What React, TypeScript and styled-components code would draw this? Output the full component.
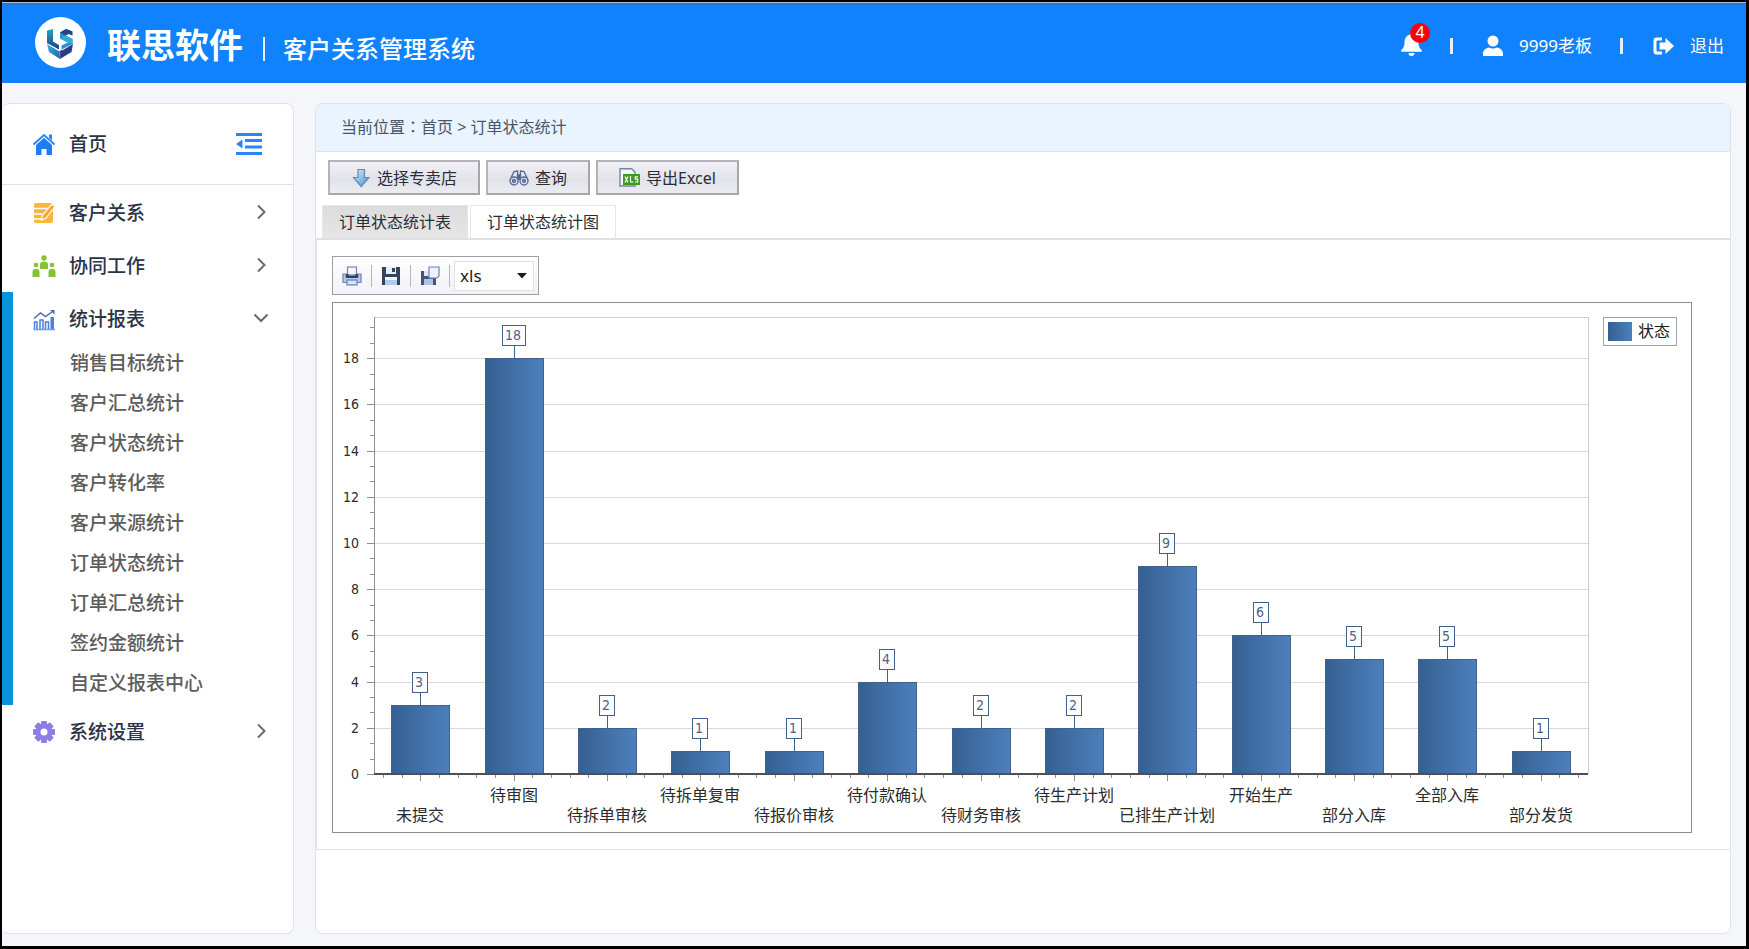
import React, { useState } from "react";
import styled, { createGlobalStyle } from "styled-components";

const sans = '"Noto Sans", "Noto Sans CJK SC", sans-serif';
const chartFont = '"DejaVu Sans Condensed", "Noto Sans CJK SC", sans-serif';

const GlobalStyle = createGlobalStyle`
  *, *::before, *::after { box-sizing: border-box; }
  body { margin: 0; background: #f5f6fa; font-family: ${sans}; }
  button, select { font-family: inherit; }
`;

const Page = styled.div`
  display: flex;
  flex-direction: column;
  min-height: 100vh;
  border: 2px solid #000;
  border-right-width: 3px;
  border-bottom-width: 3px;
  background: #f5f6fa;
`;

/* ---------- header ---------- */

const Header = styled.header`
  display: flex;
  align-items: center;
  height: 81px;
  padding: 0 22px 0 33px;
  border-top: 1px solid #a9c0e6;
  background: #1182fd;
  box-shadow: inset 0 2px 0 #2c74cf;
  color: #fff;
`;

const LogoMark = styled.svg`
  flex: none;
  width: 51px;
  height: 51px;
  margin-bottom: 2px;
`;

const BrandName = styled.h1`
  margin: 0 0 0 21px;
  padding-top: 4px;
  font-size: 34px;
  line-height: 40px;
  font-weight: 700;
  white-space: nowrap;
`;

const BrandRule = styled.span`
  width: 2px;
  height: 24px;
  margin: 12px 18px 0 20px;
  background: #e2efff;
`;

const SystemName = styled.h2`
  margin: 0;
  padding-top: 12px;
  font-size: 24px;
  line-height: 32px;
  font-weight: 500;
  white-space: nowrap;
`;

const UserArea = styled.div`
  display: flex;
  align-items: center;
  margin-left: auto;
  padding-top: 5px;
  font-size: 17px;
  line-height: 24px;
`;

const HeaderRule = styled.span`
  width: 3px;
  height: 16px;
  margin: 0 30px 0 28px;
  background: #e2efff;
`;

const BellButton = styled.button`
  position: relative;
  display: flex;
  margin-bottom: 2px;
  padding: 0;
  border: 0;
  background: none;
  color: inherit;
`;

const Badge = styled.span`
  position: absolute;
  top: -10px;
  right: -8px;
  width: 20px;
  height: 20px;
  border-radius: 50%;
  background: #fb0007;
  font-size: 16px;
  line-height: 19px;
  text-align: center;
`;

const HeaderLink = styled.a`
  display: flex;
  align-items: center;
  gap: 16px;
  color: inherit;
  text-decoration: none;
  white-space: nowrap;
`;

/* ---------- page body ---------- */

const Body = styled.div`
  display: flex;
  flex: 1;
  gap: 21px;
  padding: 20px 15px 12px 0;
`;

const Sidebar = styled.nav`
  flex: none;
  width: 292px;
  border: 1px solid #e0e2eb;
  border-left: 0;
  border-radius: 8px;
  background: #fff;
  overflow: hidden;
`;

const HomeRow = styled.div`
  display: flex;
  align-items: center;
  height: 81px;
  margin-bottom: 1px;
  padding: 0 31px 0 30px;
  border-bottom: 1px solid #dfe1e8;
`;

const HomeLink = styled.a`
  display: flex;
  align-items: center;
  gap: 13px;
  color: #2b3347;
  font-size: 19px;
  line-height: 28px;
  font-weight: 500;
  text-decoration: none;
`;

const CollapseButton = styled.button`
  display: flex;
  margin-left: auto;
  padding: 0;
  border: 0;
  background: none;
`;

const Group = styled.div<{ $open?: boolean }>`
  border-left: 11px solid ${(p) => (p.$open ? "#0893dc" : "transparent")};
`;

const GroupButton = styled.button`
  display: flex;
  align-items: center;
  width: 100%;
  height: 53px;
  padding: 0 24px 0 19px;
  border: 0;
  background: none;
  color: #2b3347;
  font-size: 19px;
  line-height: 28px;
  font-weight: 500;
  text-align: left;
`;

const GroupLabel = styled.span`
  flex: 1;
  margin-left: 13px;
`;

const SubList = styled.ul`
  margin: 0;
  padding: 0;
  list-style: none;
`;

const SubLink = styled.a`
  display: block;
  padding: 8px 0 12px 57px;
  color: #5c5c5c;
  font-size: 19px;
  line-height: 20px;
  font-weight: 500;
  text-decoration: none;
`;

const Main = styled.main`
  flex: 1;
  min-width: 0;
  border: 1px solid #e0e2eb;
  border-radius: 8px;
  background: #fff;
  overflow: hidden;
`;

const Breadcrumb = styled.div`
  height: 48px;
  padding: 10px 25px;
  border-bottom: 1px solid #dce6f2;
  background: #e9f4ff;
  color: #4a5568;
  font-size: 16px;
  line-height: 24px;

  a { color: inherit; text-decoration: none; }
`;

/* The Traditional Chinese face sets its colon in the middle of the em box. */
const Colon = styled.span`
  font-family: "Noto Sans CJK TC", sans-serif;
`;

const Actions = styled.div`
  display: flex;
  gap: 6px;
  padding: 8px 12px 10px;
`;

const ActionButton = styled.button`
  display: flex;
  align-items: center;
  justify-content: center;
  gap: 6px;
  height: 35px;
  padding: 0 21px;
  border: 2px solid #a6a6ab;
  border-top-color: #b4b4b8;
  border-left-color: #b4b4b8;
  background: linear-gradient(#f1f1f6, #e2e2e9 55%, #ebebf2);
  color: #2a2c38;
  font-size: 16px;
  line-height: 24px;
`;

const Tabs = styled.div`
  display: flex;
  gap: 2px;
  padding: 0 6px;
  border-bottom: 2px solid #e0e0e2;
`;

const Tab = styled.button<{ $active?: boolean }>`
  height: 33px;
  padding: 0 16px;
  border: 1px solid #e6e6e8;
  border-bottom: 0;
  background: ${(p) => (p.$active ? "#fff" : "linear-gradient(#dcdcdd, #e6e6e7)")};
  color: #2a2c38;
  font-size: 16px;
  line-height: 24px;
`;

const TabPanel = styled.section`
  padding: 16px 38px 16px 15px;
  border-left: 1px solid #e0e2eb;
  border-bottom: 1px solid #e3e3ea;
`;

const ReportToolbar = styled.div`
  display: flex;
  align-items: center;
  width: fit-content;
  height: 39px;
  padding: 0 4px 0 9px;
  border: 1px solid #9d9ea6;
  background: linear-gradient(#fff, #f1f1f7);
`;

const ToolButton = styled.button`
  display: flex;
  padding: 0;
  border: 0;
  background: none;
`;

const ToolRule = styled.span<{ $last?: boolean }>`
  width: 1px;
  height: 22px;
  margin: 0 ${(p) => (p.$last ? 4 : 9)}px 0 9px;
  background: #b4b5c2;
`;

const FormatField = styled.label`
  position: relative;
  display: flex;
  align-items: center;

  svg { position: absolute; right: 7px; pointer-events: none; }
`;

const FormatSelect = styled.select`
  width: 80px;
  height: 30px;
  padding: 0 20px 0 5px;
  border: 1px solid #e0e0e6;
  border-radius: 0;
  background: #fff;
  color: #1c1c1c;
  font-size: 17px;
  appearance: none;
`;

const ChartFrame = styled.div`
  margin-top: 7px;
  border: 1px solid #8c8c8c;
  background: #fff;
`;

const ChartSvg = styled.svg`
  display: block;
  width: 100%;
  height: auto;
  font-family: ${chartFont};
`;

/* ---------- icons ---------- */

const Logo = () => (
  <LogoMark viewBox="0 0 51 51" aria-hidden="true">
    <defs>
      <linearGradient id="logoTeal" x1="0" y1="0" x2="0" y2="1">
        <stop offset="0" stopColor="#2aa3c4" />
        <stop offset="1" stopColor="#1c3f8c" />
      </linearGradient>
      <linearGradient id="logoLeft" x1="0" y1="0" x2="1" y2="1">
        <stop offset="0" stopColor="#3fb4dd" />
        <stop offset="1" stopColor="#1f5fb0" />
      </linearGradient>
    </defs>
    <circle cx="25.5" cy="25.5" r="25.5" fill="#fff" />
    <path d="M12 13.500l6-1.500v12.500l6 3.500v4.500L12 26z" fill="url(#logoTeal)" />
    <path d="M12 27l12.500 7.500L25 42l-11-7z" fill="url(#logoLeft)" />
    <path d="M38 27l-12.500 7.500L25 42l11.500-7z" fill="#273d88" />
    <path d="M24.500 34l3-1.500-2 9.500z" fill="#4a3f8c" />
    <path d="M37.500 14.500L31 12l-6 3.500v6l8 4-6.500 3v4l11-5.500v-5l-7-3.500z" fill="#2a8fcb" />
    <path d="M31 12l6.500 2.500v4l-4-1.500-3 1.500-5.500-3z" fill="#22438f" />
    <path d="M30.500 18.500l7 3.500v5l-4.500-1.500-8-4z" fill="#2cb0d4" />
  </LogoMark>
);

const BellIcon = () => (
  <svg width="21" height="23" viewBox="0 0 21 23" fill="#fff" aria-hidden="true">
    <path d="M10.500 0a2 2 0 0 1 2 1.800C15.800 2.700 17.500 5.500 17.500 9c0 4.500 1.300 6.300 3 8 .8.900.4 1.800-.8 1.800H1.300c-1.200 0-1.600-.9-.8-1.800 1.700-1.700 3-3.500 3-8 0-3.500 1.700-6.300 5-7.200a2 2 0 0 1 2-1.800zM7.500 20h6a3 3 0 0 1-6 0z" />
  </svg>
);

const UserIcon = () => (
  <svg width="20" height="22" viewBox="0 0 20 22" fill="#fff" aria-hidden="true">
    <circle cx="10" cy="6" r="5.500" />
    <path d="M0 21v-2.500C0 15 3 13 6 12.500c2.500 1.300 5.500 1.300 8 0 3 .5 6 2.500 6 6V21z" />
  </svg>
);

const LogoutIcon = () => (
  <svg width="21" height="18" viewBox="0 0 21 18" fill="#fff" aria-hidden="true">
    <path d="M9 .5H3.500A3 3 0 0 0 .5 3.500v11a3 3 0 0 0 3 3H9v-3H4.500a1 1 0 0 1-1-1v-9a1 1 0 0 1 1-1H9z" />
    <path d="M12.500 1L21 9l-8.500 8v-4.500H6.500v-7h6z" />
  </svg>
);

const HomeIcon = () => (
  <svg width="24" height="24" viewBox="0 0 24 24" aria-hidden="true">
    <path d="M1.500 12.500L12 3l10.500 9.500" fill="none" stroke="#2a86f5" strokeWidth="2" />
    <path d="M17 2.500h3v6l-3-2.700z" fill="#2a86f5" />
    <path d="M4 13l8-7.200 8 7.200v10h-5.500v-6h-5v6H4z" fill="#1f7df3" />
  </svg>
);

const CollapseIcon = () => (
  <svg width="26" height="24" viewBox="0 0 26 24" fill="#2a86f5" aria-hidden="true">
    <path d="M0 1h26v3H0zM9 7h17v3H9zM9 13.500h17v3H9zM0 20h26v3H0zM6.500 7.500v9L0 12z" />
  </svg>
);

const NoteIcon = () => (
  <svg width="24" height="24" viewBox="0 0 24 24" aria-hidden="true">
    <path d="M4 2h15a2 2 0 0 1 2 2v16a2 2 0 0 1-2 2H4a2 2 0 0 1-2-2V4a2 2 0 0 1 2-2z" fill="#fbb43c" />
    <path d="M2 7.500h14M2 13h8M2 18h7" stroke="#fff" strokeWidth="1.500" />
    <path d="M20 3l3 2.500L14 17l-4.500 2 1-5z" fill="#f9a62b" stroke="#fff" strokeWidth="1.200" />
  </svg>
);

const TeamIcon = () => (
  <svg width="24" height="24" viewBox="0 0 24 24" fill="#86c232" aria-hidden="true">
    <circle cx="12" cy="4" r="2.700" />
    <path d="M8 15v-4.500C8 8.500 9.500 7.500 12 7.500s4 1 4 3V15z" />
    <circle cx="4" cy="11" r="2.300" />
    <circle cx="20" cy="11" r="2.300" />
    <path d="M.5 23v-5c0-2 1.500-3.200 3.500-3.200S7.500 16 7.500 18v5zM16.500 23v-5c0-2 1.500-3.200 3.500-3.200s3.500 1.200 3.500 3.200v5z" />
  </svg>
);

const ReportIcon = () => (
  <svg width="24" height="24" viewBox="0 0 24 24" aria-hidden="true">
    <path d="M2.500 22v-7h2.500v7M8 22v-9h3v9M13.500 22v-7h3v7" fill="none" stroke="#4a7fdc" strokeWidth="1.500" />
    <path d="M18.500 10H22v12h-3.500z" fill="#4a7fdc" />
    <path d="M1.500 22.500h21.500" stroke="#6ea0ee" strokeWidth="1.500" />
    <path d="M2 11.500l6.500-5.500 5 3.500L20 5" fill="none" stroke="#4c68b8" strokeWidth="1.500" />
    <path d="M18 3h4.500v4.500z" fill="#4c68b8" />
  </svg>
);

const GearIcon = () => (
  <svg width="24" height="24" viewBox="0 0 24 24" fill="#8c7ee6" aria-hidden="true">
    <g>
      {[0, 45, 90, 135].map((a) => (
        <rect key={a} x="9" y="1" width="6" height="22" rx="1" transform={`rotate(${a} 12 12)`} />
      ))}
      <circle cx="12" cy="12" r="8.500" />
    </g>
    <circle cx="12" cy="12" r="3.500" fill="#fff" />
  </svg>
);

const Chevron = ({ open }: { open?: boolean }) => (
  <svg width="16" height="16" viewBox="0 0 16 16" fill="none" stroke="#6a6a6a" strokeWidth="2" aria-hidden="true">
    <path d={open ? "M1.500 3.500L8 10l6.500-6.500" : "M5 0.500l6.500 6.500L5 13.500"} />
  </svg>
);

const DownIcon = () => (
  <svg width="20" height="20" viewBox="0 0 20 20" aria-hidden="true">
    <defs>
      <linearGradient id="downFill" x1="0" y1="0" x2="1" y2="1">
        <stop offset="0" stopColor="#d8f0fb" />
        <stop offset="1" stopColor="#4f8ec8" />
      </linearGradient>
    </defs>
    <path d="M7 1.500h6.500v8H18l-7.800 9L2.500 9.500H7z" fill="url(#downFill)" stroke="#5f8ab4" strokeWidth="1.200" />
  </svg>
);

const BinocularsIcon = () => (
  <svg width="20" height="18" viewBox="0 0 20 18" fill="#dfe6f6" stroke="#55668f" strokeWidth="1.300" aria-hidden="true">
    <path d="M1 11L5 2.500 8.500 2l.5 9M19 11l-4-8.500-3.500-.5-.5 9" />
    <path d="M8.500 6h3v4h-3z" fill="#55668f" />
    <circle cx="5" cy="12" r="4" />
    <circle cx="15" cy="12" r="4" />
    <circle cx="5" cy="12" r="1.500" fill="#8fa6dc" />
    <circle cx="15" cy="12" r="1.500" fill="#8fa6dc" />
  </svg>
);

const XlsIcon = () => (
  <svg width="21" height="19" viewBox="0 0 21 19" aria-hidden="true">
    <path d="M1 .8h11.500L16 4v14H1z" fill="#f4f7fb" stroke="#6f86a6" strokeWidth="1.400" />
    <rect x="4" y="6" width="17" height="11" fill="#3f9a1d" />
    <path d="M6 8.500l3 6M9 8.500l-3 6M11.500 8v6h3M19 8.800h-2.700v2.400h2.400v2.800H16" fill="none" stroke="#fff" strokeWidth="1.200" />
  </svg>
);

const PrintIcon = () => (
  <svg width="20" height="20" viewBox="0 0 20 20" aria-hidden="true">
    <path d="M1 8h3v3h12V8h3v8.500H1z" fill="#b9cbea" stroke="#6b80ad" strokeWidth="1.200" />
    <rect x="5.500" y="1" width="9" height="8" fill="#f3f7fd" stroke="#6f86b6" strokeWidth="1.200" />
    <path d="M4 8h2.500v1.500h7V8H16v4H4z" fill="#38415a" />
    <rect x="5" y="14" width="10" height="5" fill="#cfe6fd" stroke="#5f86c4" strokeWidth="1.200" />
  </svg>
);

const SaveIcon = () => (
  <svg width="20" height="20" viewBox="0 0 20 20" aria-hidden="true">
    <path d="M1 1h18v18H1z" fill="#364358" />
    <rect x="5" y="1" width="10" height="7" fill="#e6eef8" />
    <rect x="11" y="2" width="3" height="4" fill="#364358" />
    <rect x="4" y="11" width="12" height="8" fill="#a8cdf0" />
    <rect x="4" y="11" width="12" height="3" fill="#eef5fc" />
  </svg>
);

const SaveAsIcon = () => (
  <svg width="20" height="20" viewBox="0 0 20 20" aria-hidden="true">
    <path d="M1 5h15v14H1z" fill="#46526f" />
    <rect x="4" y="5" width="8" height="5" fill="#dce7f6" />
    <rect x="4" y="13" width="9" height="6" fill="#a8c6ec" />
    <path d="M9 1h10v9l-2 2H9z" fill="#edf3fc" stroke="#6f82ae" strokeWidth="1.200" />
  </svg>
);

/* ---------- chart ---------- */

const data: { name: string; value: number }[] = [
  { name: "未提交", value: 3 },
  { name: "待审图", value: 18 },
  { name: "待拆单审核", value: 2 },
  { name: "待拆单复审", value: 1 },
  { name: "待报价审核", value: 1 },
  { name: "待付款确认", value: 4 },
  { name: "待财务审核", value: 2 },
  { name: "待生产计划", value: 2 },
  { name: "已排生产计划", value: 9 },
  { name: "开始生产", value: 6 },
  { name: "部分入库", value: 5 },
  { name: "全部入库", value: 5 },
  { name: "部分发货", value: 1 },
];

const plot = { left: 41, right: 1255, top: 14, bottom: 471 };
const step = (plot.right - plot.left) / data.length;
const barWidth = 58;
const yOf = (v: number) => Math.round(plot.bottom - v * 23.1);
const minorY = Array.from({ length: 30 }, (_, i) => i).filter((i) => i % 3 !== 0);
const minorX = Array.from({ length: data.length * 5 }, (_, i) => i).filter((i) => i % 5 !== 2);

const StatusChart = () => (
  <ChartSvg viewBox="0 0 1358 529" role="img" aria-label="订单状态统计图">
    <defs>
      <linearGradient id="barFill" x1="0" x2="1" y1="0" y2="0">
        <stop offset="0" stopColor="#365f91" />
        <stop offset="1" stopColor="#4c80bc" />
      </linearGradient>
    </defs>

    <g shapeRendering="crispEdges" stroke="#d9d9dc">
      {[2, 4, 6, 8, 10, 12, 14, 16, 18].map((v) => (
        <line key={v} x1={plot.left} x2={plot.right} y1={yOf(v)} y2={yOf(v)} />
      ))}
      <path d={`M${plot.left} ${plot.top}H${plot.right}V${plot.bottom}`} fill="none" stroke="#cdcdd0" />
    </g>

    <g shapeRendering="crispEdges" stroke="#909090">
      <line x1={plot.left} x2={plot.left} y1={plot.top} y2={plot.bottom} />
      {[0, 2, 4, 6, 8, 10, 12, 14, 16, 18].map((v) => (
        <line key={v} x1={plot.left - 7} x2={plot.left} y1={yOf(v)} y2={yOf(v)} />
      ))}
      {minorY.map((i) => (
        <line key={i} x1={plot.left - 4} x2={plot.left} y1={yOf((i * 2) / 3)} y2={yOf((i * 2) / 3)} />
      ))}
      {data.map((d, i) => {
        const x = plot.left + step * (i + 0.5);
        return <line key={d.name} x1={x} x2={x} y1={plot.bottom} y2={plot.bottom + 7} />;
      })}
      {minorX.map((i) => {
        const x = plot.left + (step / 5) * (i + 0.5);
        return <line key={i} x1={x} x2={x} y1={plot.bottom} y2={plot.bottom + 4} />;
      })}
    </g>

    <g fontSize="14" fill="#2b2b2b" textAnchor="end">
      {[0, 2, 4, 6, 8, 10, 12, 14, 16, 18].map((v) => (
        <text key={v} x={26} y={yOf(v) + 5}>{v}</text>
      ))}
    </g>

    {data.map((d, i) => {
      const x = Math.floor(plot.left + step * (i + 0.5));
      const y = yOf(d.value);
      const tagWidth = d.value > 9 ? 23 : 15;
      return (
        <g key={d.name}>
          <g shapeRendering="crispEdges" stroke="#42608c">
            <rect x={x - barWidth / 2} y={y} width={barWidth} height={plot.bottom - y} fill="url(#barFill)" />
            <line x1={x} x2={x} y1={y - 13} y2={y} />
            <rect x={x - (tagWidth + 1) / 2} y={y - 33} width={tagWidth} height={20} fill="#fff" />
          </g>
          <text x={x - 1} y={y - 18} fontSize="14" textAnchor="middle" fill="#4a6289">{d.value}</text>
          <text x={x} y={i % 2 ? 498 : 518} fontSize="16" textAnchor="middle" fill="#2b2b2b">{d.name}</text>
        </g>
      );
    })}

    <rect x={plot.left} y={plot.bottom - 1} width={plot.right - plot.left} height="2" fill="#4d4f55" />

    <rect x="1270.5" y="14.5" width="73" height="28" fill="#fff" stroke="#a3a3a3" />
    <rect x="1275" y="19" width="24" height="19" fill="url(#barFill)" />
    <text x="1305" y="34" fontSize="16" fill="#1c1c1c">状态</text>
  </ChartSvg>
);

/* ---------- navigation data ---------- */

const groups = [
  { label: "客户关系", Icon: NoteIcon, items: [] as string[] },
  { label: "协同工作", Icon: TeamIcon, items: [] as string[] },
  {
    label: "统计报表",
    Icon: ReportIcon,
    items: [
      "销售目标统计",
      "客户汇总统计",
      "客户状态统计",
      "客户转化率",
      "客户来源统计",
      "订单状态统计",
      "订单汇总统计",
      "签约金额统计",
      "自定义报表中心",
    ],
  },
  { label: "系统设置", Icon: GearIcon, items: [] as string[] },
];

export default function App() {
  const [openGroup, setOpenGroup] = useState("统计报表");

  return (
    <>
      <GlobalStyle />
      <Page>
        <Header>
          <Logo />
          <BrandName>联思软件</BrandName>
          <BrandRule />
          <SystemName>客户关系管理系统</SystemName>
          <UserArea>
            <BellButton type="button" aria-label="消息">
              <BellIcon />
              <Badge>4</Badge>
            </BellButton>
            <HeaderRule />
            <HeaderLink href="#user">
              <UserIcon />
              9999老板
            </HeaderLink>
            <HeaderRule />
            <HeaderLink href="#logout">
              <LogoutIcon />
              退出
            </HeaderLink>
          </UserArea>
        </Header>

        <Body>
          <Sidebar>
            <HomeRow>
              <HomeLink href="#home">
                <HomeIcon />
                首页
              </HomeLink>
              <CollapseButton type="button" aria-label="收起菜单">
                <CollapseIcon />
              </CollapseButton>
            </HomeRow>
            {groups.map(({ label, Icon, items }) => {
              const open = openGroup === label;
              return (
                <Group key={label} $open={open}>
                  <GroupButton type="button" aria-expanded={open} onClick={() => setOpenGroup(open ? "" : label)}>
                    <Icon />
                    <GroupLabel>{label}</GroupLabel>
                    <Chevron open={open} />
                  </GroupButton>
                  {open && items.length > 0 && (
                    <SubList>
                      {items.map((item) => (
                        <li key={item}>
                          <SubLink href={`#${item}`}>{item}</SubLink>
                        </li>
                      ))}
                    </SubList>
                  )}
                </Group>
              );
            })}
          </Sidebar>

          <Main>
            <Breadcrumb>
              当前位置<Colon>：</Colon><a href="#home">首页</a> &gt; 订单状态统计
            </Breadcrumb>
            <Actions>
              <ActionButton type="button">
                <DownIcon />
                选择专卖店
              </ActionButton>
              <ActionButton type="button">
                <BinocularsIcon />
                查询
              </ActionButton>
              <ActionButton type="button">
                <XlsIcon />
                导出Excel
              </ActionButton>
            </Actions>
            <Tabs role="tablist">
              <Tab type="button" role="tab" aria-selected={false}>订单状态统计表</Tab>
              <Tab type="button" role="tab" aria-selected $active>订单状态统计图</Tab>
            </Tabs>
            <TabPanel role="tabpanel">
              <ReportToolbar>
                <ToolButton type="button" aria-label="打印"><PrintIcon /></ToolButton>
                <ToolRule />
                <ToolButton type="button" aria-label="保存"><SaveIcon /></ToolButton>
                <ToolRule />
                <ToolButton type="button" aria-label="另存为"><SaveAsIcon /></ToolButton>
                <ToolRule $last />
                <FormatField>
                  <FormatSelect aria-label="导出格式" defaultValue="xls">
                    <option>xls</option>
                    <option>pdf</option>
                  </FormatSelect>
                  <svg width="10" height="6" viewBox="0 0 10 6" aria-hidden="true">
                    <path d="M0 0h10L5 5.500z" fill="#1c1c1c" />
                  </svg>
                </FormatField>
              </ReportToolbar>
              <ChartFrame>
                <StatusChart />
              </ChartFrame>
            </TabPanel>
          </Main>
        </Body>
      </Page>
    </>
  );
}
